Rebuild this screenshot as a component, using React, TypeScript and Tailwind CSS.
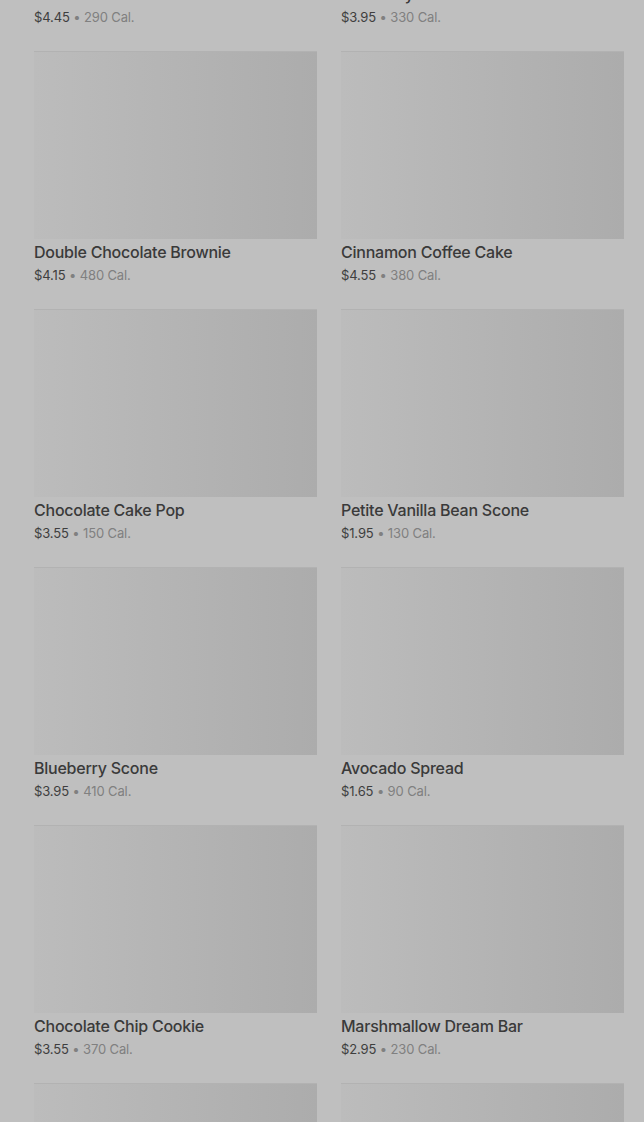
import React from 'react';

const items = [
  { name: 'Butter Croissant', price: '$4.45', cal: '290 Cal.' },
  { name: 'Blueberry Muffin', price: '$3.95', cal: '330 Cal.' },
  { name: 'Double Chocolate Brownie', price: '$4.15', cal: '480 Cal.' },
  { name: 'Cinnamon Coffee Cake', price: '$4.55', cal: '380 Cal.' },
  { name: 'Chocolate Cake Pop', price: '$3.55', cal: '150 Cal.' },
  { name: 'Petite Vanilla Bean Scone', price: '$1.95', cal: '130 Cal.' },
  { name: 'Blueberry Scone', price: '$3.95', cal: '410 Cal.' },
  { name: 'Avocado Spread', price: '$1.65', cal: '90 Cal.' },
  { name: 'Chocolate Chip Cookie', price: '$3.55', cal: '370 Cal.' },
  { name: 'Marshmallow Dream Bar', price: '$2.95', cal: '230 Cal.' },
  { name: 'Classic Coffee Cake', price: '$3.75', cal: '390 Cal.' },
  { name: 'Lemon Loaf', price: '$3.45', cal: '470 Cal.' },
];

const App: React.FC = () => {
  return (
    <div className="h-[1122px] overflow-hidden bg-[#bfbfbf] font-['Inter',sans-serif]">
      <div className="-mt-[207px] grid grid-cols-2 gap-x-6 gap-y-6 pl-[34px] pr-[20px]">
        {items.map((item) => (
          <div key={item.name}>
            <div className="h-[188px] border-t border-[#b2b2b2] bg-gradient-to-r from-[#bcbcbc] to-[#acacac]" />
            <p className="mt-[3px] text-base leading-5 font-medium tracking-[-0.015em] text-[#3a3a3a]">{item.name}</p>
            <p className="mt-[3px] text-[13px] leading-5 tracking-[-0.01em] text-[#3e3e3e]">
              {item.price} <span className="text-[#808080]">• {item.cal}</span>
            </p>
          </div>
        ))}
      </div>
    </div>
  );
};

export default App;
